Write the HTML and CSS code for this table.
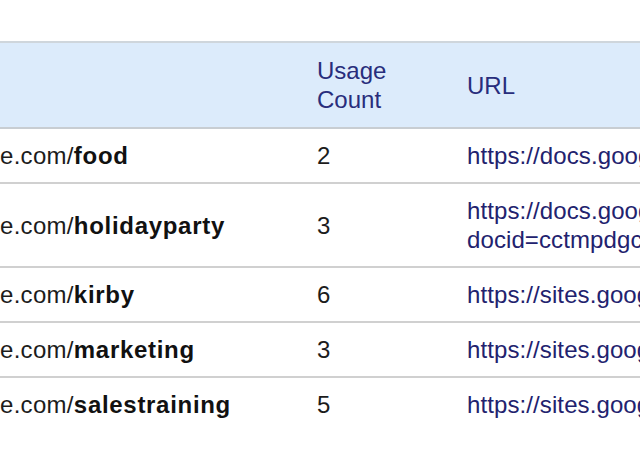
FILE: index.html
```html
<!DOCTYPE html>
<html>
<head>
<meta charset="utf-8">
<link rel="stylesheet" href="styles.css">
</head>
<body>
<div class="frame">
<table class="links">
  <thead>
    <tr>
      <th class="c-name"></th>
      <th class="c-count">Usage<br>Count</th>
      <th class="c-url">URL</th>
    </tr>
  </thead>
  <tbody>
    <tr>
      <td class="c-name">e.com/<b>food</b></td>
      <td class="c-count">2</td>
      <td class="c-url"><a>https://docs.google.com/a/example.com/document/d/food</a></td>
    </tr>
    <tr>
      <td class="c-name">e.com/<b>holidayparty</b></td>
      <td class="c-count">3</td>
      <td class="c-url"><a>https://docs.google.com/a/example.com/Doc?<br>docid=cctmpdgc_holidayparty</a></td>
    </tr>
    <tr>
      <td class="c-name">e.com/<b>kirby</b></td>
      <td class="c-count">6</td>
      <td class="c-url"><a>https://sites.google.com/a/example.com/kirby</a></td>
    </tr>
    <tr>
      <td class="c-name">e.com/<b>marketing</b></td>
      <td class="c-count">3</td>
      <td class="c-url"><a>https://sites.google.com/a/example.com/marketing</a></td>
    </tr>
    <tr>
      <td class="c-name">e.com/<b>salestraining</b></td>
      <td class="c-count">5</td>
      <td class="c-url"><a>https://sites.google.com/a/example.com/sales</a></td>
    </tr>
  </tbody>
</table>
</div>
</body>
</html>
```

FILE: styles.css
```css
html, body {
  margin: 0;
  padding: 0;
  background: #ffffff;
}
body {
  width: 640px;
  height: 471px;
  overflow: hidden;
  font-family: "Liberation Sans", Arial, sans-serif;
}
.frame {
  padding-top: 41px;
  width: 640px;
  overflow: hidden;
}
.links {
  border-collapse: collapse;
  table-layout: fixed;
  width: 1000px;
  font-size: 24px;
  line-height: 29px;
  color: #1c1c1c;
}
.links th,
.links td {
  text-align: left;
  vertical-align: middle;
  white-space: nowrap;
  overflow: hidden;
}
.links th {
  background: #dcebfb;
  color: #282d7c;
  font-weight: normal;
  padding: 13px 0 13px 12px;
  border-top: 2px solid #cfd6dc;
  border-bottom: 2px solid #c8cdd2;
}
.links td {
  padding: 12px 0 12px 12px;
  border-bottom: 2px solid #d0d0d0;
}
.links tbody tr:last-child td {
  border-bottom: none;
}
.links .c-name {
  width: 305px;
  padding-left: 0;
  letter-spacing: 0.3px;
}
.links .c-count {
  width: 138px;
}
.links .c-url {
  width: 545px;
}
.links b {
  font-weight: bold;
  color: #111111;
  letter-spacing: 0.7px;
}
.links a {
  color: #22226e;
  text-decoration: none;
  letter-spacing: 0.1px;
}
```
